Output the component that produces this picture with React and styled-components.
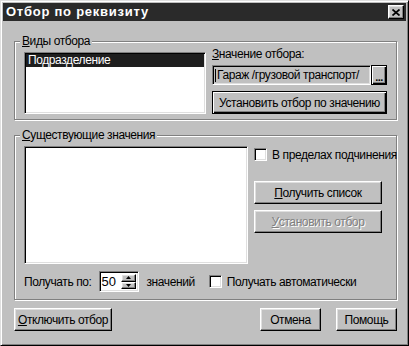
import styled, { createGlobalStyle, css } from "styled-components"

const GlobalStyle = createGlobalStyle`
  html, body {
    margin: 0;
    padding: 0;
    background: #c0c0c0;
  }
  body {
    font-family: "Liberation Sans", Arial, sans-serif;
    font-size: 12px;
    letter-spacing: -0.4px;
    color: #000;
  }
`

const raised = css`
  border: 1px solid;
  border-color: #fff #000 #000 #fff;
  box-shadow: inset -1px -1px 0 #808080, inset 1px 1px 0 #dfdfdf;
`
const sunken = css`
  border: 1px solid;
  border-color: #808080 #fff #fff #808080;
  box-shadow: inset 1px 1px 0 #000, inset -1px -1px 0 #dfdfdf;
`

const Window = styled.div`
  box-sizing: border-box;
  width: 409px;
  height: 346px;
  padding: 2px;
  display: flex;
  flex-direction: column;
  background: #c0c0c0;
  border: 1px solid;
  border-color: #dfdfdf #000 #000 #dfdfdf;
  box-shadow: inset 1px 1px 0 #fff, inset -1px -1px 0 #808080;
`
const TitleBar = styled.div`
  height: 18px;
  display: flex;
  align-items: center;
  justify-content: space-between;
  padding: 0 2px 0 3px;
  background: #2a2a2a;
`
const Title = styled.div`
  color: #fff;
  font-weight: bold;
  font-size: 13px;
  line-height: 18px;
  letter-spacing: 0.75px;
`
const CloseButton = styled.div`
  box-sizing: border-box;
  width: 16px;
  height: 14px;
  display: flex;
  align-items: center;
  justify-content: center;
  background: #c0c0c0;
  ${raised}
`
const Content = styled.div`
  flex: 1;
  padding: 20px 9px 0 11px;
`
const Group = styled.div`
  position: relative;
  box-sizing: border-box;
  height: ${p => p.$h}px;
  margin-top: ${p => p.$mt || 0}px;
  padding: ${p => p.$pad};
  border: 1px solid #808080;
  box-shadow: inset 1px 1px 0 #fff, 1px 1px 0 #fff;
`
const Legend = styled.div`
  position: absolute;
  top: -8px;
  left: 5px;
  padding: 0 2px;
  line-height: 14px;
  background: #c0c0c0;
`
const Row = styled.div`
  display: flex;
  align-items: flex-start;
  gap: ${p => p.$gap || 0}px;
`
const ListBox = styled.div`
  box-sizing: border-box;
  width: ${p => p.$w}px;
  height: ${p => p.$h}px;
  margin-top: ${p => p.$mt || 0}px;
  padding: 1px;
  background: #fff;
  ${sunken}
`
const ListItem = styled.div`
  height: 13px;
  line-height: 13px;
  padding-left: 2px;
  background: ${p => (p.$selected ? "#1e1e1e" : "transparent")};
  color: ${p => (p.$selected ? "#fff" : "#000")};
`
const Column = styled.div`
  display: flex;
  flex-direction: column;
  width: ${p => p.$w}px;
  padding-top: ${p => p.$pt || 0}px;
`
const Label = styled.div`
  line-height: 14px;
  white-space: nowrap;
`
const FieldRow = styled.div`
  display: flex;
  height: 20px;
  margin-top: 4px;
`
const Field = styled.div`
  flex: 1;
  box-sizing: border-box;
  display: flex;
  align-items: center;
  padding-left: 2px;
  background: #c0c0c0;
  white-space: nowrap;
  overflow: hidden;
  ${sunken}
`
const Caret = styled.span`
  width: 1px;
  height: 13px;
  margin-right: 1px;
  background: #000;
`
const Button = styled.div`
  box-sizing: border-box;
  width: ${p => (p.$w ? `${p.$w}px` : "auto")};
  height: ${p => p.$h || 23}px;
  margin-top: ${p => p.$mt || 0}px;
  display: flex;
  align-items: center;
  justify-content: center;
  background: #c0c0c0;
  white-space: nowrap;
  ${raised}
  ${p => p.$default && css`
    border: 1px solid #000;
    box-shadow: inset 1px 1px 0 #fff, inset -1px -1px 0 #000, inset -2px -2px 0 #808080;
  `}
  ${p => p.$disabled && css`
    color: #808080;
    text-shadow: 1px 1px 0 #fff;
  `}
`
const DotsButton = styled(Button)`
  width: 16px;
  height: 20px;
  align-items: flex-end;
  padding-bottom: 3px;
  font-weight: bold;
  font-size: 11px;
  line-height: 8px;
  letter-spacing: -0.5px;
`
const CheckRow = styled.div`
  display: flex;
  align-items: center;
  gap: 5px;
  height: 13px;
  margin-left: ${p => p.$ml || 0}px;
  white-space: nowrap;
`
const CheckBox = styled.span`
  box-sizing: border-box;
  width: 13px;
  height: 13px;
  flex: 0 0 13px;
  background: #fff;
  ${sunken}
`
const BottomRow = styled.div`
  display: flex;
  align-items: center;
  height: 21px;
  margin-top: 7px;
`
const Spin = styled.div`
  box-sizing: border-box;
  width: 40px;
  height: 21px;
  margin: 0 8px 0 7px;
  display: flex;
  background: #fff;
  padding: 2px;
  ${sunken}
`
const SpinValue = styled.div`
  flex: 1;
  line-height: 15px;
  font-size: 13px;
  letter-spacing: 0;
`
const SpinButtons = styled.div`
  display: flex;
  flex-direction: column;
  width: 15px;
`
const SpinButton = styled.div`
  box-sizing: border-box;
  flex: 1;
  display: flex;
  align-items: center;
  justify-content: center;
  background: #c0c0c0;
  ${raised}
`
const Footer = styled.div`
  display: flex;
  align-items: center;
  margin-top: 8px;
`
const Spacer = styled.div`
  flex: 1;
`
const FooterGap = styled.div`
  width: 15px;
`

function Arrow({ up }) {
  return (
    <svg width="5" height="3" viewBox="0 0 5 3">
      <path d={up ? "M2.5 0 L5 3 L0 3 Z" : "M0 0 L5 0 L2.5 3 Z"} fill="#000" />
    </svg>
  )
}

export default function App() {
  return (
    <>
      <GlobalStyle />
      <Window>
        <TitleBar>
          <Title>Отбор по реквизиту</Title>
          <CloseButton>
            <svg width="8" height="7" viewBox="0 0 8 7">
              <path d="M0.5 0.5 L7.5 6.5 M7.5 0.5 L0.5 6.5" stroke="#000" strokeWidth="1.7" />
            </svg>
          </CloseButton>
        </TitleBar>
        <Content>
          <Group $h={79} $pad="5px 0 0 9px">
            <Legend><u>В</u>иды отбора</Legend>
            <Row $gap={6}>
              <ListBox $w={182} $h={62} $mt={5}>
                <ListItem $selected>Подразделение</ListItem>
              </ListBox>
              <Column $w={175}>
                <Label><u>З</u>начение отбора:</Label>
                <FieldRow>
                  <Field><Caret />Гараж /грузовой транспорт/</Field>
                  <DotsButton $default>...</DotsButton>
                </FieldRow>
                <Button $default $mt={6}>Установить отбор по значению</Button>
              </Column>
            </Row>
          </Group>
          <Group $h={165} $mt={15} $pad="10px 0 0 9px">
            <Legend><u>С</u>уществующие значения</Legend>
            <Row $gap={6}>
              <ListBox $w={224} $h={118} />
              <Column $w={140} $pt={2}>
                <CheckRow>
                  <CheckBox />
                  <span>В пределах подчинения</span>
                </CheckRow>
                <Button $w={128} $mt={20}><u>П</u>олучить список</Button>
                <Button $w={128} $mt={6} $disabled><u>У</u>становить отбор</Button>
              </Column>
            </Row>
            <BottomRow>
              <Label>Получать по:</Label>
              <Spin>
                <SpinValue>50</SpinValue>
                <SpinButtons>
                  <SpinButton><Arrow up /></SpinButton>
                  <SpinButton><Arrow /></SpinButton>
                </SpinButtons>
              </Spin>
              <Label>значений</Label>
              <CheckRow $ml={14}>
                <CheckBox />
                <span>Получать автоматически</span>
              </CheckRow>
            </BottomRow>
          </Group>
          <Footer>
            <Button $w={98}><u>О</u>тключить отбор</Button>
            <Spacer />
            <Button $w={61}>Отмена</Button>
            <FooterGap />
            <Button $w={61}>Помощь</Button>
          </Footer>
        </Content>
      </Window>
    </>
  )
}
